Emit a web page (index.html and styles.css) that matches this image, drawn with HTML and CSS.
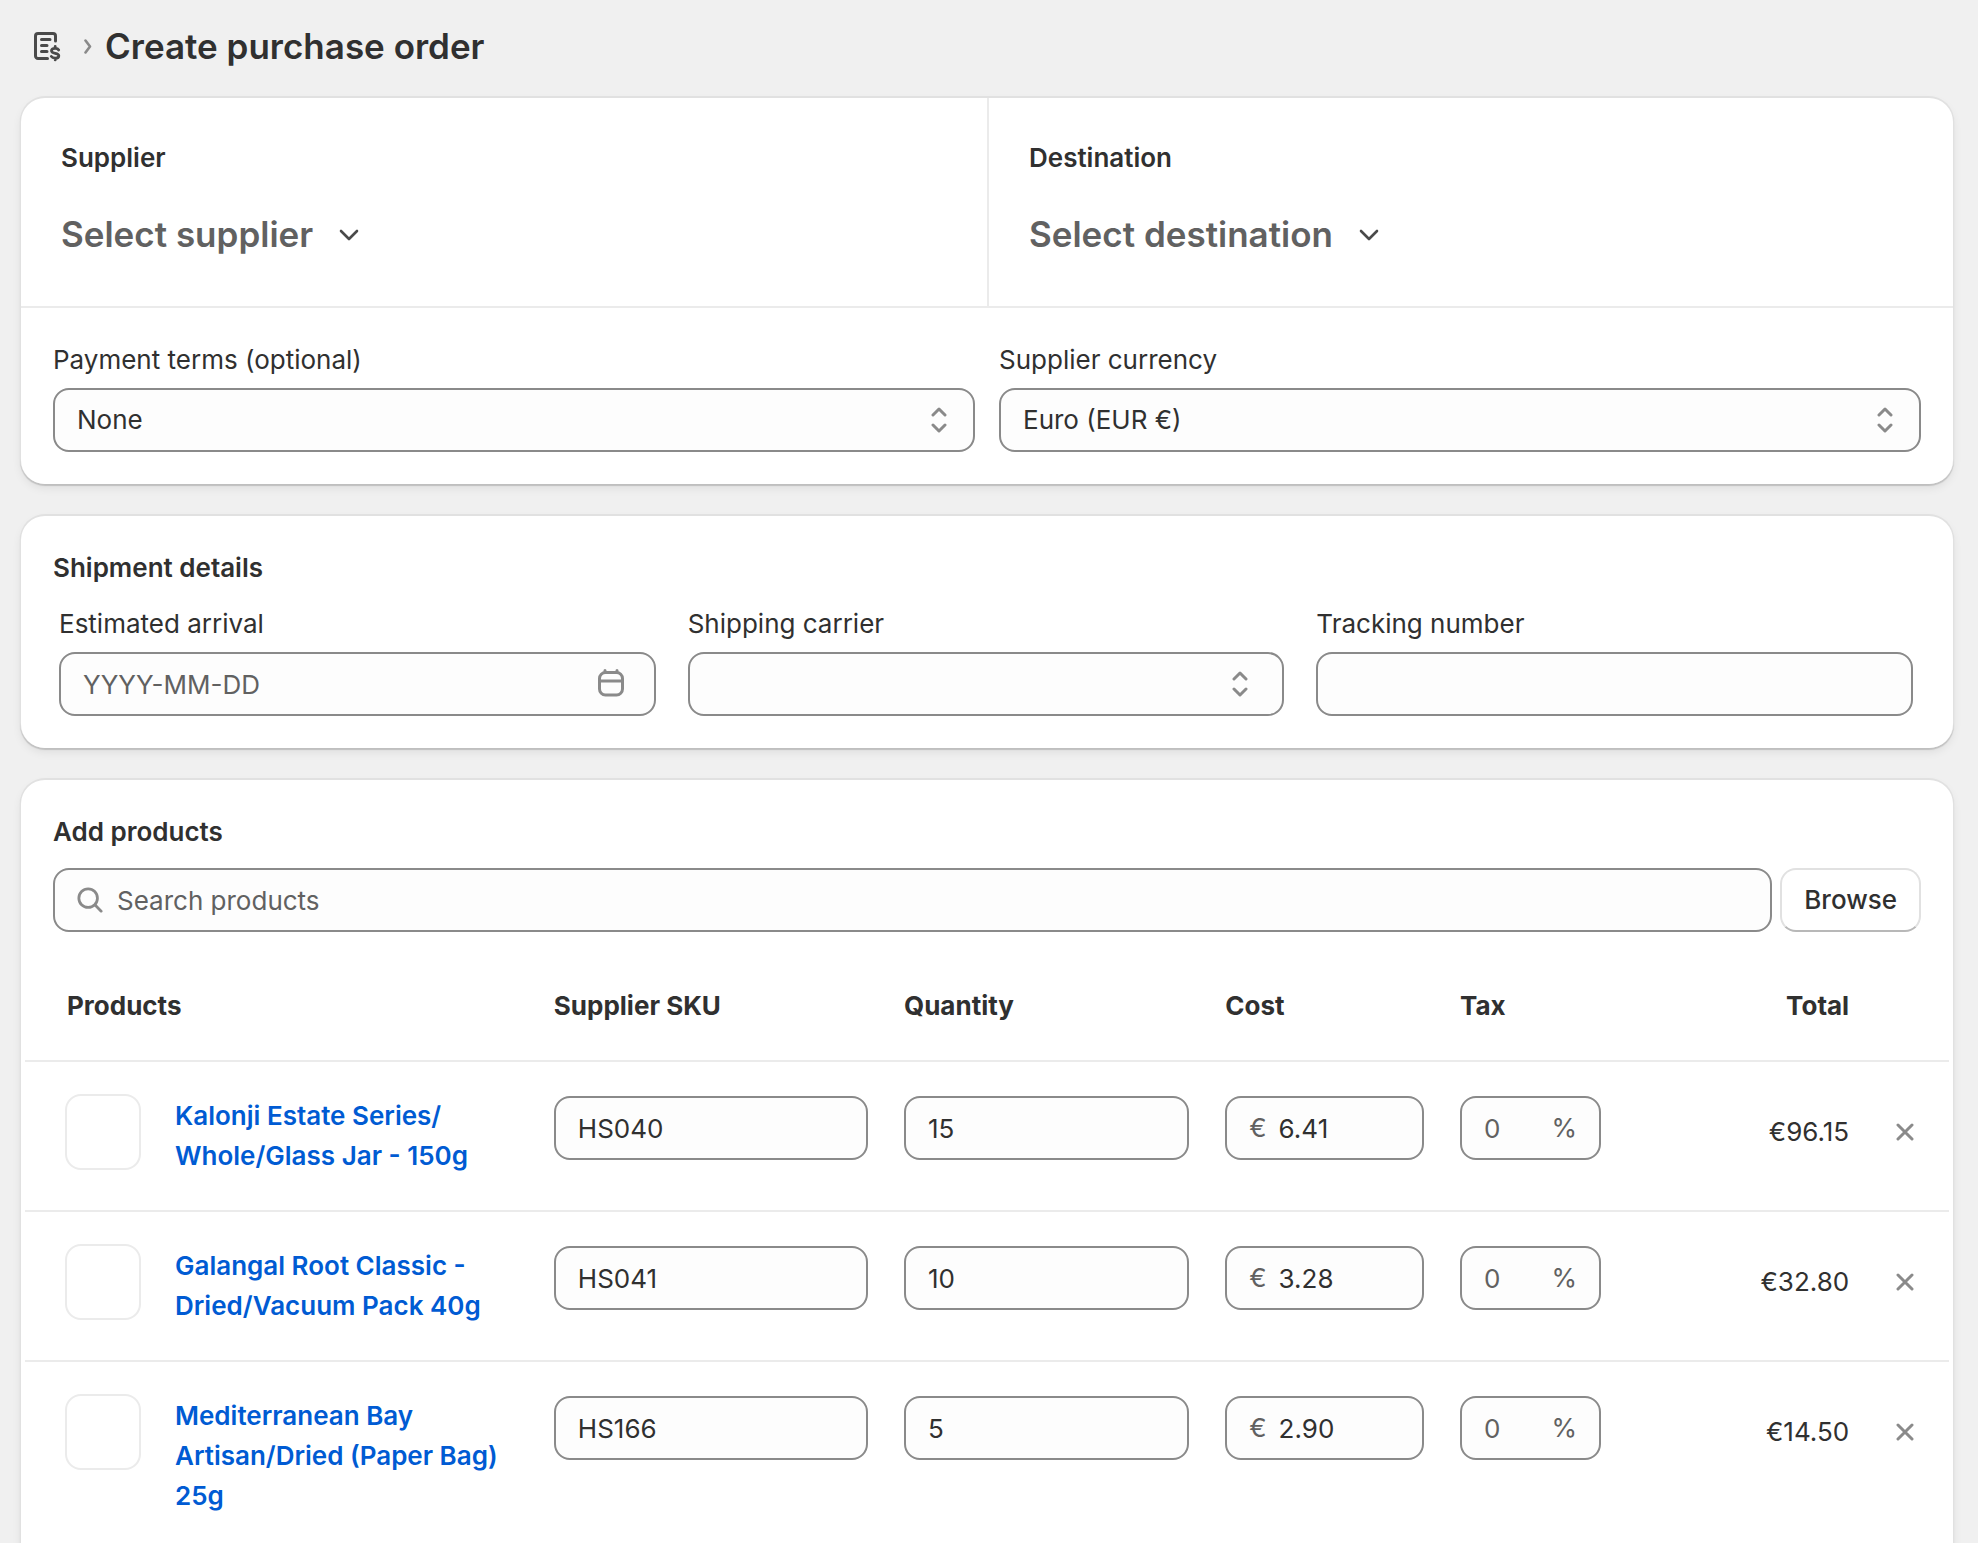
FILE: index.html
```html
<!DOCTYPE html>
<html lang="en">
<head>
  <meta charset="UTF-8" />
  <meta name="viewport" content="width=device-width, initial-scale=1.0"/>
  <title>Create purchase order</title>
  <link rel="stylesheet" href="styles.css">
</head>
<body>
  <!-- Page header -->
  <header class="page-header">
    <a href="#" class="back-link" aria-label="Purchase orders">
      <svg class="icon-order" viewBox="0 0 28 32" fill="none" stroke="#4a4a4a" stroke-width="3" stroke-linecap="round" stroke-linejoin="round">
        <path d="M21.500 11V6a2.500 2.500 0 0 0-2.500-2.500H4A2.500 2.500 0 0 0 1.500 6v20A2.500 2.500 0 0 0 4 28.500h9.500"/>
        <path d="M7.500 9.500H16M7.500 15.500H13M7.500 21.500H13"/>
        <path stroke-width="2.800" d="M24.700 20c-.6-1.200-1.800-1.700-3.500-1.700-2.200 0-3.700.8-3.700 2.400 0 3.500 7.300 1.700 7.300 5 0 1.600-1.500 2.500-3.600 2.500-1.900 0-3.200-.6-3.900-1.800M21.200 16.500v1.300M21.200 28.500v1.400"/>
      </svg>
    </a>
    <svg class="icon-crumb" viewBox="0 0 8 16" fill="none" stroke="#8a8a8a" stroke-width="2.600" stroke-linecap="round" stroke-linejoin="round">
      <path d="M1.500 2.500l4.500 6-4.500 6"/>
    </svg>
    <h1>Create purchase order</h1>
  </header>

  <main class="page">
    <!-- Supplier and destination -->
    <section class="card">
      <div class="parties">
        <div class="party">
          <h2>Supplier</h2>
          <button type="button" class="picker">
            Select supplier
            <svg class="icon-down" viewBox="0 0 20 14" fill="none" stroke="#4a4a4a" stroke-width="2.600" stroke-linecap="round" stroke-linejoin="round"><path d="M2 4l8 8 8-8"/></svg>
          </button>
        </div>
        <div class="party">
          <h2>Destination</h2>
          <button type="button" class="picker">
            Select destination
            <svg class="icon-down" viewBox="0 0 20 14" fill="none" stroke="#4a4a4a" stroke-width="2.600" stroke-linecap="round" stroke-linejoin="round"><path d="M2 4l8 8 8-8"/></svg>
          </button>
        </div>
      </div>
      <div class="terms">
        <div class="field">
          <label for="paymentTerms">Payment terms (optional)</label>
          <div class="control">
            <select id="paymentTerms">
              <option>None</option>
            </select>
            <svg class="icon-select" viewBox="0 0 16 26" fill="none" stroke="#8a8a8a" stroke-width="3" stroke-linecap="round" stroke-linejoin="round"><path d="M2 8l6-6 6 6M2 18l6 6 6-6"/></svg>
          </div>
        </div>
        <div class="field">
          <label for="currency">Supplier currency</label>
          <div class="control">
            <select id="currency">
              <option>Euro (EUR €)</option>
            </select>
            <svg class="icon-select" viewBox="0 0 16 26" fill="none" stroke="#8a8a8a" stroke-width="3" stroke-linecap="round" stroke-linejoin="round"><path d="M2 8l6-6 6 6M2 18l6 6 6-6"/></svg>
          </div>
        </div>
      </div>
    </section>

    <!-- Shipment details -->
    <section class="card shipment">
      <h2>Shipment details</h2>
      <div class="shipment-fields">
        <div class="field">
          <label for="arrival">Estimated arrival</label>
          <div class="control">
            <input type="text" id="arrival" placeholder="YYYY-MM-DD" />
            <svg class="icon-date" viewBox="0 0 26 30" fill="none" stroke="#8a8a8a" stroke-width="3" stroke-linecap="round"><rect x="1.500" y="3.500" width="23" height="22.500" rx="6"/><path d="M2 12h22M7 1.500v2M19 1.500v2"/></svg>
          </div>
        </div>
        <div class="field">
          <label for="carrier">Shipping carrier</label>
          <div class="control">
            <select id="carrier">
              <option></option>
            </select>
            <svg class="icon-select" viewBox="0 0 16 26" fill="none" stroke="#8a8a8a" stroke-width="3" stroke-linecap="round" stroke-linejoin="round"><path d="M2 8l6-6 6 6M2 18l6 6 6-6"/></svg>
          </div>
        </div>
        <div class="field">
          <label for="tracking">Tracking number</label>
          <div class="control">
            <input type="text" id="tracking" />
          </div>
        </div>
      </div>
    </section>

    <!-- Products -->
    <section class="card products">
      <div class="add-products">
        <h2><label for="search">Add products</label></h2>
        <div class="search-row">
          <div class="control">
            <svg class="icon-search" viewBox="0 0 28 28" fill="none" stroke="#8a8a8a" stroke-width="3" stroke-linecap="round"><circle cx="12" cy="12" r="10"/><path d="M19.500 19.500l6.500 6.500"/></svg>
            <input type="text" id="search" placeholder="Search products" />
          </div>
          <button type="button" class="browse-btn">Browse</button>
        </div>
      </div>

      <table>
        <thead>
          <tr>
            <th class="col-product">Products</th>
            <th class="col-sku">Supplier SKU</th>
            <th class="col-quantity">Quantity</th>
            <th class="col-cost">Cost</th>
            <th class="col-tax">Tax</th>
            <th class="col-total">Total</th>
            <th class="col-remove"></th>
          </tr>
        </thead>
        <tbody>
          <tr>
            <td class="col-product">
              <div class="product">
                <span class="thumb"></span>
                <a href="#">Kalonji Estate Series/<wbr>Whole/Glass Jar - 150g</a>
              </div>
            </td>
            <td><div class="control"><input type="text" value="HS040" aria-label="Supplier SKU" /></div></td>
            <td><div class="control"><input type="text" value="15" aria-label="Quantity" /></div></td>
            <td><div class="control"><span class="unit">€</span><input type="text" value="6.41" aria-label="Cost" /></div></td>
            <td><div class="control"><input type="text" placeholder="0" aria-label="Tax" /><span class="unit">%</span></div></td>
            <td class="col-total"><div class="total">€96.15</div></td>
            <td class="col-remove">
              <button type="button" class="remove-btn" aria-label="Remove">
                <svg viewBox="0 0 18 18" fill="none" stroke="#8a8a8a" stroke-width="3" stroke-linecap="round"><path d="M2 2l14 14M16 2L2 16"/></svg>
              </button>
            </td>
          </tr>
          <tr>
            <td class="col-product">
              <div class="product">
                <span class="thumb"></span>
                <a href="#">Galangal Root Classic - Dried/Vacuum Pack 40g</a>
              </div>
            </td>
            <td><div class="control"><input type="text" value="HS041" aria-label="Supplier SKU" /></div></td>
            <td><div class="control"><input type="text" value="10" aria-label="Quantity" /></div></td>
            <td><div class="control"><span class="unit">€</span><input type="text" value="3.28" aria-label="Cost" /></div></td>
            <td><div class="control"><input type="text" placeholder="0" aria-label="Tax" /><span class="unit">%</span></div></td>
            <td class="col-total"><div class="total">€32.80</div></td>
            <td class="col-remove">
              <button type="button" class="remove-btn" aria-label="Remove">
                <svg viewBox="0 0 18 18" fill="none" stroke="#8a8a8a" stroke-width="3" stroke-linecap="round"><path d="M2 2l14 14M16 2L2 16"/></svg>
              </button>
            </td>
          </tr>
          <tr>
            <td class="col-product">
              <div class="product">
                <span class="thumb"></span>
                <a href="#">Mediterranean Bay Artisan/Dried (Paper Bag) 25g</a>
              </div>
            </td>
            <td><div class="control"><input type="text" value="HS166" aria-label="Supplier SKU" /></div></td>
            <td><div class="control"><input type="text" value="5" aria-label="Quantity" /></div></td>
            <td><div class="control"><span class="unit">€</span><input type="text" value="2.90" aria-label="Cost" /></div></td>
            <td><div class="control"><input type="text" placeholder="0" aria-label="Tax" /><span class="unit">%</span></div></td>
            <td class="col-total"><div class="total">€14.50</div></td>
            <td class="col-remove">
              <button type="button" class="remove-btn" aria-label="Remove">
                <svg viewBox="0 0 18 18" fill="none" stroke="#8a8a8a" stroke-width="3" stroke-linecap="round"><path d="M2 2l14 14M16 2L2 16"/></svg>
              </button>
            </td>
          </tr>
        </tbody>
      </table>
    </section>
  </main>
</body>
</html>
```
FILE: styles.css
```css
* {
  box-sizing: border-box;
  margin: 0;
  padding: 0;
}

body {
  background: #f0f0f0;
  color: #303030;
  font-family: 'Inter', sans-serif;
  font-size: 26px;
  line-height: 40px;
}

button, input, select {
  font: inherit;
  color: inherit;
}

button {
  cursor: pointer;
}

svg {
  display: block;
  flex-shrink: 0;
}

h1 {
  font-size: 35px;
  font-weight: 600;
  line-height: 48px;
}

h2 {
  font-size: 26px;
  font-weight: 600;
  line-height: 40px;
}

.page-header {
  display: flex;
  align-items: center;
  padding: 22px 34px 0;
}

.icon-order {
  width: 28px;
  height: 32px;
}

.icon-crumb {
  width: 8px;
  height: 16px;
  margin: 0 13px 0 22px;
}

.page {
  display: flex;
  flex-direction: column;
  gap: 32px;
  padding: 28px 25px 32px 21px;
}

.card {
  background: #fff;
  border-radius: 24px;
  box-shadow: 0 -1px 0 1px #e1e1e1, 0 1px 1px 1px rgba(0, 0, 0, 0.15), 0 4px 10px rgba(0, 0, 0, 0.08);
}

/* Supplier and destination */
.parties {
  display: grid;
  grid-template-columns: 1fr 1fr;
  border-bottom: 2px solid #ebebeb;
}

.party {
  padding: 40px;
}

.party + .party {
  border-left: 2px solid #ebebeb;
}

.picker {
  display: flex;
  align-items: center;
  gap: 26px;
  margin-top: 24px;
  padding: 8px 0;
  background: none;
  border: none;
  color: #616161;
  font-size: 35px;
  font-weight: 600;
  line-height: 48px;
}

.icon-down {
  width: 20px;
  height: 14px;
}

.terms {
  display: grid;
  grid-template-columns: 1fr 1fr;
  gap: 24px;
  padding: 32px;
}

/* Form controls */
.field label {
  display: block;
  margin-bottom: 8px;
}

.control {
  display: flex;
  align-items: center;
  height: 64px;
  padding: 0 22px;
  background: #fdfdfd;
  border: 2px solid #8a8a8a;
  border-radius: 16px;
}

.control:focus-within {
  border-color: #005bd3;
}

.control input,
.control select {
  flex: 1;
  width: 100%;
  min-width: 0;
  height: 60px;
  background: none;
  border: none;
  outline: none;
  appearance: none;
}

.control input::placeholder {
  color: #616161;
  opacity: 1;
}

.icon-select {
  width: 16px;
  height: 26px;
  margin-right: 4px;
}

.icon-date {
  width: 26px;
  height: 30px;
  margin-right: 8px;
}

.icon-search {
  width: 26px;
  height: 26px;
  margin-right: 14px;
}

.unit {
  color: #616161;
}

.unit + input {
  margin-left: 12px;
}

/* Shipment details */
.shipment {
  padding: 32px;
}

.shipment-fields {
  display: grid;
  grid-template-columns: repeat(3, 1fr);
  gap: 32px;
  margin-top: 16px;
  padding: 0 8px 0 6px;
}

.shipment-fields .icon-select {
  margin-right: 12px;
}

/* Products */
.products {
  padding: 32px 4px;
}

.add-products {
  padding: 0 28px;
}

.search-row {
  display: flex;
  gap: 8px;
  margin: 16px 0 20px;
}

.search-row .control {
  flex: 1;
}

.browse-btn {
  height: 64px;
  padding: 0 22px;
  background: #fff;
  border: 2px solid #e1e1e1;
  border-bottom-color: #b8b8b8;
  border-radius: 16px;
  font-weight: 550;
}

table {
  width: 100%;
  table-layout: fixed;
  border-collapse: collapse;
}

th {
  padding: 34px 18px;
  font-weight: 650;
  text-align: left;
}

td {
  padding: 34px 18px;
  border-top: 2px solid #ebebeb;
  vertical-align: top;
}

.col-product {
  width: 26.55%;
  padding-left: 40px;
  padding-right: 26px;
}

th.col-product {
  padding-left: 42px;
}

.col-sku {
  width: 18.2%;
}

.col-quantity {
  width: 16.7%;
}

.col-cost {
  width: 12.2%;
}

.col-tax {
  width: 9.2%;
}

.col-total {
  width: 12.9%;
  text-align: right;
}

td.col-product,
td.col-total,
td.col-remove {
  padding-top: 32px;
}

td.col-remove {
  padding-left: 0;
}

.product {
  display: flex;
  align-items: flex-start;
  gap: 34px;
}

.thumb {
  flex-shrink: 0;
  width: 76px;
  height: 76px;
  border: 2px solid #ebebeb;
  border-radius: 16px;
}

.product a {
  padding-top: 2px;
  color: #005bd3;
  font-weight: 600;
  text-decoration: none;
}

.product a:hover {
  text-decoration: underline;
}

.total {
  line-height: 76px;
}

.remove-btn {
  display: flex;
  align-items: center;
  justify-content: center;
  width: 76px;
  height: 76px;
  background: none;
  border: none;
}

.remove-btn svg {
  width: 18px;
  height: 18px;
}
```
